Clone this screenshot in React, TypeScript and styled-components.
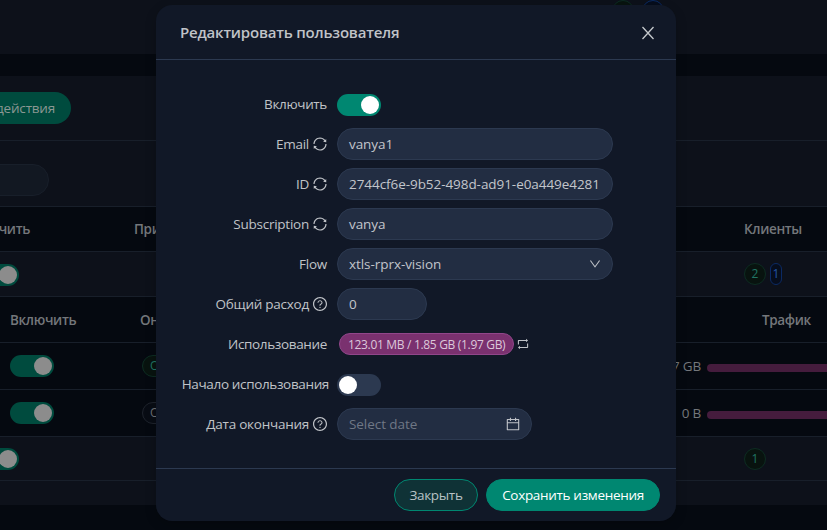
import React from 'react';
import styled, { createGlobalStyle, css } from 'styled-components';
import {
  AiOutlineCalendar,
  AiOutlineDown,
  AiOutlineQuestionCircle,
  AiOutlineRetweet,
  AiOutlineSync,
} from 'react-icons/ai';

const BOX = '64 64 896 896';

const GlobalStyle = createGlobalStyle`
  * { box-sizing: border-box; }
  body {
    margin: 0;
    overflow: hidden;
    background: #050910;
    font-family: "Open Sans", "Noto Sans", sans-serif;
    font-size: 13.5px;
    font-weight: 450;
    line-height: 22px;
  }
  svg { display: block; flex: none; }
`;

/* ---------- page behind the dialog ---------- */

const Page = styled.div`
  position: relative;
  width: 827px;
  height: 530px;
  overflow: hidden;
  background: #050910;
  color: #74777b;
`;

const SummaryCard = styled.div`
  display: flex;
  gap: 8px;
  height: 54px;
  padding-left: 612px;
  background: #0d111a;
`;

const ListCard = styled.div`
  height: 429px;
  margin-top: 22px;
  background: #0d111a;
`;

const ActionsBar = styled.div`
  display: flex;
  align-items: center;
  height: 65px;
  border-bottom: 1px solid #181f2a;
`;

const ActionsButton = styled.div`
  display: flex;
  align-items: center;
  justify-content: flex-end;
  width: 91px;
  height: 32px;
  margin-left: -20px;
  padding-right: 16px;
  border-radius: 16px;
  background: #004b3e;
  color: #8b9793;
  letter-spacing: -0.2px;
  white-space: nowrap;
`;

const SearchArea = styled.div`
  height: 65px;
  padding-top: 23px;
`;

const SearchBox = styled.div`
  width: 89px;
  height: 32px;
  margin-left: -40px;
  border: 1px solid #181f2a;
  border-radius: 16px;
  background: #121822;
`;

const TableRow = styled.div<{ $h: number; $dark?: boolean; $top?: boolean }>`
  display: grid;
  grid-template-columns: 134px 570px 123px;
  align-items: center;
  height: ${(p) => p.$h}px;
  border-bottom: 1px solid #181f2a;
  ${(p) => p.$top && css`border-top: 1px solid #181f2a;`}
  background: ${(p) => (p.$dark ? '#050910' : '#0d111a')};
  white-space: nowrap;
`;

const Cell = styled.div<{ $left?: number; $bold?: boolean; $right?: number; $nudge?: boolean }>`
  display: flex;
  align-items: center;
  gap: 4px;
  margin-left: ${(p) => p.$left ?? 0}px;
  ${(p) => p.$nudge && css`padding-top: 1px;`}
  ${(p) =>
    p.$right !== undefined &&
    css`
      justify-content: flex-end;
      margin-right: ${p.$right}px;
    `}
  ${(p) =>
    p.$bold &&
    css`
      font-weight: 600;
      letter-spacing: -0.35px;
    `}
`;

const Amount = styled.span`
  margin-left: auto;
  padding-right: 3px;
  letter-spacing: -0.2px;
`;

const tones = {
  green: ['#0d2c22', '#08130f', '#207565'],
  blue: ['#0b2a63', '#060d1c', '#2356a8'],
  gray: ['#1e232c', '#080c14', '#6f7276'],
};

const Badge = styled.span<{ $tone: keyof typeof tones; $w: number; $text?: boolean }>`
  display: flex;
  flex: none;
  align-items: center;
  justify-content: ${(p) => (p.$text ? 'flex-start' : 'center')};
  width: ${(p) => p.$w}px;
  height: 22px;
  padding-left: ${(p) => (p.$text ? 7 : 0)}px;
  border: 1px solid ${(p) => tones[p.$tone][0]};
  border-radius: 11px;
  background: ${(p) => tones[p.$tone][1]};
  color: ${(p) => tones[p.$tone][2]};
  font-size: 12px;
`;

const TrafficBar = styled.div`
  height: 8px;
  margin: 4px 0 0 3px;
  border-radius: 4px 0 0 4px;
  background: #451c3d;
`;

const Toggle = styled.span<{ $on?: boolean; $dim?: boolean }>`
  display: flex;
  flex: none;
  justify-content: ${(p) => (p.$on ? 'flex-end' : 'flex-start')};
  width: 44px;
  height: 22px;
  padding: 2px;
  border-radius: 11px;
  background: ${(p) => (p.$on ? (p.$dim ? '#004b3e' : '#008771') : '#2c3950')};

  &::after {
    content: '';
    width: 18px;
    height: 18px;
    border-radius: 50%;
    background: ${(p) => (p.$dim ? '#8c8c8c' : '#fff')};
  }
`;

/* ---------- dialog ---------- */

const Dialog = styled.section`
  position: absolute;
  left: 156px;
  top: 5px;
  width: 520px;
  height: 516px;
  display: flex;
  flex-direction: column;
  border-radius: 16px;
  background: #111827;
  color: #c0c3c8;
  box-shadow: 0 4px 12px rgba(0, 0, 0, 0.2);
  white-space: nowrap;
`;

const DialogHeader = styled.header`
  display: flex;
  align-items: center;
  justify-content: space-between;
  height: 55px;
  padding: 0 21px 0 24px;
  border-bottom: 1px solid #2c3950;
`;

const Title = styled.h1`
  margin: 0;
  font-size: 15px;
  font-weight: 600;
  letter-spacing: -0.2px;
`;

const CloseIcon = styled.svg`
  width: 14px;
  height: 14px;
  margin-top: 2px;
  fill: none;
  stroke: #c6c9cd;
  stroke-width: 1.3;
`;

const DialogBody = styled.div`
  display: flex;
  flex: 1;
  flex-direction: column;
  gap: 8px;
  padding: 28px 24px 0;
`;

const FormRow = styled.div`
  display: grid;
  grid-template-columns: 149px 1fr;
  column-gap: 8px;
  align-items: center;
  height: 32px;
`;

const Label = styled.label<{ $cyr?: boolean; $wide?: boolean }>`
  display: flex;
  align-items: center;
  justify-content: flex-end;
  gap: 4px;
  padding-right: ${(p) => (p.$wide ? 0 : 2)}px;
  letter-spacing: ${(p) => (p.$cyr ? -0.35 : -0.25)}px;
`;

const Control = styled.div<{ $nudge?: boolean }>`
  display: flex;
  align-items: center;
  gap: 3px;
  ${(p) => p.$nudge && css`padding-top: 2px;`}
`;

const Field = styled.div<{ $w: number; $muted?: boolean }>`
  display: flex;
  align-items: center;
  justify-content: space-between;
  width: ${(p) => p.$w}px;
  height: 32px;
  padding: 0 11px;
  border: 1px solid #2c3950;
  border-radius: 16px;
  background: #222d42;
  color: ${(p) => (p.$muted ? '#6f7785' : '#c2c5cb')};
  letter-spacing: -0.06px;
  overflow: hidden;

  svg { color: #bdc0c6; }
`;

const UsageTag = styled.span`
  width: 175px;
  height: 22px;
  margin-left: 2px;
  padding-left: 8px;
  border: 1px solid #91468a;
  border-radius: 11px;
  background: #7a316f;
  color: #dcc8da;
  font-size: 12px;
  line-height: 21px;
  letter-spacing: -0.32px;
`;

const DialogFooter = styled.footer`
  display: flex;
  justify-content: flex-end;
  gap: 8px;
  height: 53px;
  padding: 10px 16px;
  border-top: 1px solid #2c3950;
`;

const Button = styled.button<{ $primary?: boolean }>`
  width: ${(p) => (p.$primary ? 174 : 84)}px;
  height: 32px;
  padding: 0;
  border: 1px solid #008771;
  border-radius: 16px;
  background: ${(p) => (p.$primary ? '#008771' : '#0f3236')};
  color: ${(p) => (p.$primary ? '#fff' : '#b8c2c5')};
  font: inherit;
  letter-spacing: -0.32px;
`;

const Sync = () => <AiOutlineSync size={14} viewBox={BOX} />;
const Question = () => <AiOutlineQuestionCircle size={14} viewBox={BOX} />;

export default function App() {
  return (
    <>
      <GlobalStyle />
      <Page>
        <SummaryCard>
          <Badge $tone="green" $w={22} />
          <Badge $tone="blue" $w={22} />
        </SummaryCard>
        <ListCard>
          <ActionsBar>
            <ActionsButton>Общие действия</ActionsButton>
          </ActionsBar>
          <SearchArea>
            <SearchBox />
          </SearchArea>
          <TableRow $h={46} $dark $top>
            <Cell $bold $right={104}>Включить</Cell>
            <Cell $bold>Примечание</Cell>
            <Cell $bold $left={40}>Клиенты</Cell>
          </TableRow>
          <TableRow $h={45}>
            <Cell $left={-25} $nudge><Toggle $on $dim /></Cell>
            <Cell />
            <Cell $left={40}>
              <Badge $tone="green" $w={22}>2</Badge>
              <Badge $tone="blue" $w={12}>1</Badge>
            </Cell>
          </TableRow>
          <TableRow $h={46} $dark>
            <Cell $bold $left={10}>Включить</Cell>
            <Cell $bold $left={6}>Онлайн</Cell>
            <Cell $bold $left={58}>Трафик</Cell>
          </TableRow>
          <TableRow $h={47} $dark>
            <Cell $left={10}><Toggle $on $dim /></Cell>
            <Cell $left={8}>
              <Badge $tone="green" $w={60} $text>Онлайн</Badge>
              <Amount>1.97 GB</Amount>
            </Cell>
            <TrafficBar />
          </TableRow>
          <TableRow $h={47} $dark>
            <Cell $left={10}><Toggle $on $dim /></Cell>
            <Cell $left={8}>
              <Badge $tone="gray" $w={60} $text>Офлайн</Badge>
              <Amount>0 B</Amount>
            </Cell>
            <TrafficBar />
          </TableRow>
          <TableRow $h={44}>
            <Cell $left={-25}><Toggle $on $dim /></Cell>
            <Cell />
            <Cell $left={40}><Badge $tone="green" $w={22}>1</Badge></Cell>
          </TableRow>
        </ListCard>

        <Dialog role="dialog">
          <DialogHeader>
            <Title>Редактировать пользователя</Title>
            <CloseIcon viewBox="0 0 14 14">
              <path d="M1.5 1l11 12M12.5 1l-11 12" />
            </CloseIcon>
          </DialogHeader>
          <DialogBody>
            <FormRow>
              <Label $cyr>Включить</Label>
              <Control $nudge><Toggle $on /></Control>
            </FormRow>
            <FormRow>
              <Label>Email<Sync /></Label>
              <Field $w={276}>vanya1</Field>
            </FormRow>
            <FormRow>
              <Label>ID<Sync /></Label>
              <Field $w={276}>2744cf6e-9b52-498d-ad91-e0a449e4281</Field>
            </FormRow>
            <FormRow>
              <Label>Subscription<Sync /></Label>
              <Field $w={276}>vanya</Field>
            </FormRow>
            <FormRow>
              <Label>Flow</Label>
              <Field $w={276}>
                xtls-rprx-vision
                <AiOutlineDown size={12} viewBox={BOX} />
              </Field>
            </FormRow>
            <FormRow>
              <Label>Общий расход<Question /></Label>
              <Field $w={90}>0</Field>
            </FormRow>
            <FormRow>
              <Label $cyr>Использование</Label>
              <Control>
                <UsageTag>123.01 MB / 1.85 GB (1.97 GB)</UsageTag>
                <AiOutlineRetweet size={12} viewBox={BOX} />
              </Control>
            </FormRow>
            <FormRow>
              <Label $cyr $wide>Начало использования</Label>
              <Control $nudge><Toggle /></Control>
            </FormRow>
            <FormRow>
              <Label>Дата окончания<Question /></Label>
              <Field $w={195} $muted>
                Select date
                <AiOutlineCalendar size={14} viewBox={BOX} />
              </Field>
            </FormRow>
          </DialogBody>
          <DialogFooter>
            <Button>Закрыть</Button>
            <Button $primary>Сохранить изменения</Button>
          </DialogFooter>
        </Dialog>
      </Page>
    </>
  );
}
